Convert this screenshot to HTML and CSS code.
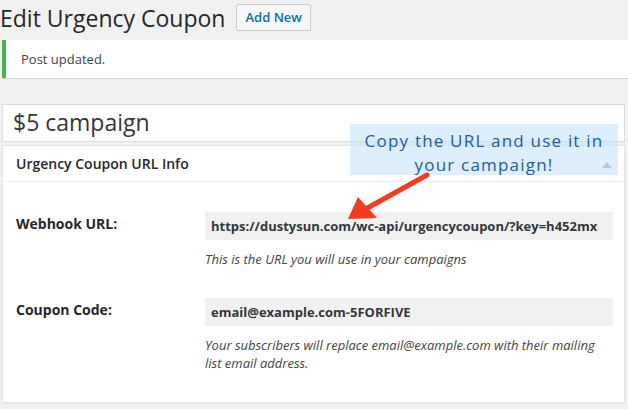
FILE: index.html
```html
<!DOCTYPE html>
<html lang="en">
<head>
    <meta charset="UTF-8">
    <title>Edit Urgency Coupon</title>
    <link rel="stylesheet" href="styles.css">
</head>
<body>
    <div class="wrap">
        <div class="page-head">
            <h1>Edit Urgency Coupon</h1>
            <a class="add-new" href="#">Add New</a>
        </div>

        <div class="notice">
            <p>Post updated.</p>
        </div>

        <div class="title-box">$5 campaign</div>

        <div class="postbox">
            <div class="postbox-head">
                <h2>Urgency Coupon URL Info</h2>
                <span class="toggle"></span>
            </div>
            <div class="postbox-body">
                <div class="field-row">
                    <label>Webhook URL:</label>
                    <div class="field">
                        <div class="field-input">https://dustysun.com/wc-api/urgencycoupon/?key=h452mx</div>
                        <p class="description">This is the URL you will use in your campaigns</p>
                    </div>
                </div>
                <div class="field-row">
                    <label>Coupon Code:</label>
                    <div class="field">
                        <div class="field-input">email@example.com-5FORFIVE</div>
                        <p class="description">Your subscribers will replace email@example.com with their mailing list email address.</p>
                    </div>
                </div>
            </div>
        </div>

        <!-- annotation drawn over the screenshot -->
        <div class="callout">Copy the URL and use it in<br>your campaign!</div>
        <svg class="arrow" width="628" height="409" viewBox="0 0 628 409">
            <line x1="427" y1="175" x2="362" y2="211" stroke="#f53b1d" stroke-width="5" stroke-linecap="round"/>
            <polygon points="348,219 358,197 377,218" fill="#f53b1d"/>
        </svg>
    </div>
</body>
</html>
```

FILE: styles.css
```css
body {
    margin: 0;
    background-color: #f1f1f1;
    font-family: "Open Sans", Arial, sans-serif;
    color: #23282d;
}

.wrap {
    position: relative;
    width: 628px;
    height: 409px;
    overflow: hidden;
}

.page-head {
    display: flex;
    align-items: center;
    height: 36px;
}

h1 {
    margin: 0;
    font-size: 23px;
    font-weight: 400;
    line-height: 34px;
    color: #23282d;
}

.add-new {
    margin-left: 11px;
    box-sizing: border-box;
    height: 27px;
    padding: 0 8px;
    border: 1px solid #ccc;
    border-radius: 2px;
    background-color: #f7f7f7;
    color: #0073aa;
    font-size: 13px;
    font-weight: 600;
    line-height: 25px;
    text-decoration: none;
    margin-top: -1px;
}

.notice {
    margin: 4px 0 0 2px;
    height: 38px;
    box-sizing: border-box;
    background-color: #ffffff;
    border-left: 4px solid #46b450;
    box-shadow: 0 1px 1px rgba(0, 0, 0, 0.1);
    display: flex;
    align-items: center;
}

.notice p {
    margin: 0 0 0 15px;
    font-size: 13px;
    color: #444;
}

.title-box {
    margin: 26px 3px 0 2px;
    height: 38px;
    box-sizing: border-box;
    border: 1px solid #ddd;
    background-color: #ffffff;
    padding-left: 10px;
    font-size: 23px;
    line-height: 34px;
    color: #32373c;
}

.postbox {
    margin: 3px 3px 0 2px;
    height: 258px;
    box-sizing: border-box;
    border: 1px solid #e5e5e5;
    background-color: #ffffff;
    box-shadow: 0 1px 1px rgba(0, 0, 0, 0.04);
}

.postbox-head {
    height: 35px;
    border-bottom: 1px solid #eee;
    display: flex;
    align-items: center;
    justify-content: space-between;
    padding: 0 12px 0 13px;
}

.postbox-head h2 {
    margin: 0;
    font-size: 14px;
    font-weight: 600;
    color: #23282d;
}

.toggle {
    width: 0;
    height: 0;
    border-left: 5px solid transparent;
    border-right: 5px solid transparent;
    border-bottom: 6px solid #a0a5aa;
    margin-top: 2px;
}

.postbox-body {
    padding: 30px 11px 0 13px;
}

.field-row {
    display: flex;
    margin-bottom: 30px;
}

.field-row label {
    width: 189px;
    font-size: 14px;
    font-weight: 700;
    color: #23282d;
    line-height: 20px;
    padding-top: 2px;
}

.field {
    width: 408px;
}

.field-input {
    height: 28px;
    box-sizing: border-box;
    background-color: #f1f1f1;
    padding-left: 6px;
    font-size: 13px;
    font-weight: 700;
    line-height: 28px;
    color: #32373c;
    white-space: nowrap;
}

.description {
    margin: 10px 0 0 0;
    font-size: 13px;
    font-style: italic;
    line-height: 18px;
    color: #444;
}

.callout {
    position: absolute;
    left: 350px;
    top: 124px;
    width: 268px;
    height: 51px;
    background-color: rgba(198, 226, 250, 0.6);
    color: #1d5ca8;
    font-size: 17px;
    letter-spacing: 1.2px;
    line-height: 24px;
    text-align: center;
    padding-top: 5px;
    box-sizing: border-box;
    white-space: nowrap;
}

.arrow {
    position: absolute;
    left: 0;
    top: 0;
}
```
